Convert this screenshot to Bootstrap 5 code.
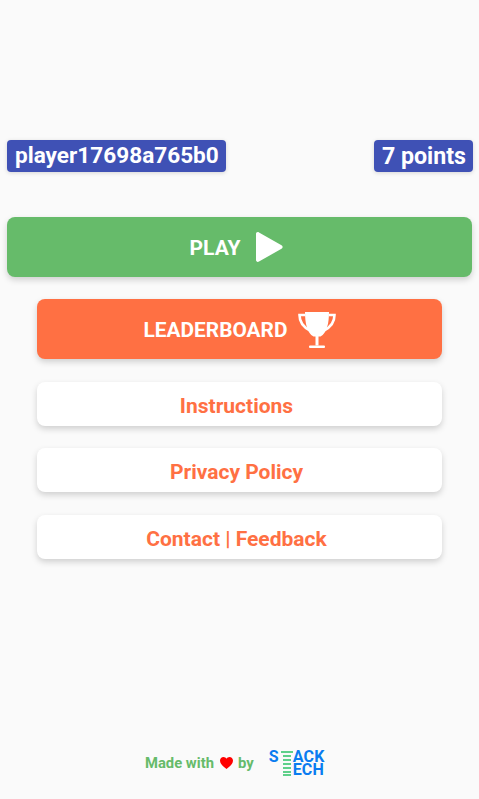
<!DOCTYPE html>
<html lang="en">
<head>
<meta charset="utf-8">
<title>Game menu</title>
<link rel="stylesheet" href="https://cdn.jsdelivr.net/npm/bootstrap@5.3.0/dist/css/bootstrap.min.css">
<style>
html,body{height:799px;overflow:hidden}
body{background:#fafafa;font-family:Roboto,"Liberation Sans",sans-serif;font-weight:700}
.game-page{height:799px;padding:140px 7px 0 7px}
.chip{background:#3f51b5;color:#fff;font-size:22.6px;line-height:32px;height:32px;padding:0 7px 0 8px;border-radius:4px;box-shadow:0 1px 4px rgba(0,0,0,.15)}
.chip-pts{font-size:23.2px}
.chip-row{margin-right:-1px;margin-bottom:45px}
.menu-btn{display:flex;align-items:center;justify-content:center;border:0;border-radius:8px;font-weight:700;width:405px;box-shadow:0 3px 6px rgba(0,0,0,.17)}
.menu-btn:hover,.menu-btn:active{box-shadow:0 3px 6px rgba(0,0,0,.17)}
.btn-label{margin-top:4px}
.play-btn{width:465px;height:60px;background:#66bb6a;color:#fff;font-size:21px;margin-bottom:22px;padding:0 6px 0 0}
.lead-btn{height:60px;background:#ff7043;color:#fff;font-size:20.85px;margin:0 auto 23px;padding:0}
.plain-btn{height:44px;background:#fff;color:#ff7043;font-size:21px;margin:0 auto 22px;padding:5px 6px 0 0}
.plain-btn.last-btn{margin-top:23px;margin-bottom:0}
.play-ico{margin-left:14px;width:29px;height:32px}
.cup-ico{margin-left:10px;width:38px;height:38px;margin-top:2px}
.foot{position:absolute;left:145px;top:748px;height:30px;color:#66bb6a;font-size:14.8px}
.heart{margin:0 5px 0 6px;width:13px;height:12px}
.stack-logo{margin-left:15px;color:#0a7cf0;font-size:16px;line-height:13px;font-weight:700;width:56px;height:26px}
.s-letter{width:12px;flex:none}
.t-mark{width:12px;height:26px;flex:none}
.word-col{letter-spacing:.2px}
.word-col div{height:13px}
</style>
</head>
<body>
<div class="game-page">
  <div class="d-flex justify-content-between chip-row">
    <span class="chip">player17698a765b0</span>
    <span class="chip chip-pts">7 points</span>
  </div>
  <button type="button" class="btn menu-btn play-btn"><span class="btn-label">PLAY</span>
    <svg class="play-ico" viewBox="0 0 29 32" aria-hidden="true"><path d="M2 3C2 1.400 3.600.6 5 1.500L27.500 14.200c1.500.9 1.500 2.700 0 3.600L5 30.500c-1.400.9-3 .1-3-1.500z" fill="#fff"/></svg>
  </button>
  <button type="button" class="btn menu-btn lead-btn"><span class="btn-label">LEADERBOARD</span>
    <svg class="cup-ico" viewBox="0 0 38 38" aria-hidden="true"><path d="M7 1h24c0 11-2 21-8.500 24.500H20.500V34.500H17.500V25.500H15.500C9 22 7 12 7 1z" fill="#fff"/><path d="M7 4H1.500C1.500 11 5 16 12 19.500M31 4H36.500C36.500 11 33 16 26 19.500" fill="none" stroke="#fff" stroke-width="2.600"/><rect x="11" y="34.500" width="16" height="2.500" rx="1" fill="#fff"/></svg>
  </button>
  <button type="button" class="btn menu-btn plain-btn">Instructions</button>
  <button type="button" class="btn menu-btn plain-btn">Privacy Policy</button>
  <button type="button" class="btn menu-btn plain-btn last-btn">Contact | Feedback</button>
</div>
<footer class="foot d-flex align-items-center">
  <span>Made with</span>
  <svg class="heart" viewBox="0 0 13 12" aria-hidden="true"><path d="M6.500 12C2 8.500 0 6.500 0 3.600 0 1.500 1.600 0 3.500 0c1.300 0 2.400.7 3 1.800C7.100.7 8.200 0 9.500 0 11.400 0 13 1.500 13 3.600c0 2.900-2 4.900-6.500 8.400z" fill="#f00"/></svg>
  <span>by</span>
  <div class="stack-logo d-flex">
    <span class="s-letter">S</span>
    <svg class="t-mark" viewBox="0 0 12 26" aria-hidden="true"><path d="M0 1h12v2H0zM2 5h8v2H2zM2 9h8v2H2zM2 13h8v2H2zM2 17h8v2H2zM2 21h8v2H2zM2 24h8v2H2z" fill="#5fd08a"/></svg>
    <div class="word-col"><div>ACK</div><div>ECH</div></div>
  </div>
</footer>
<script src="https://cdn.jsdelivr.net/npm/bootstrap@5.3.0/dist/js/bootstrap.bundle.min.js"></script>
</body>
</html>
